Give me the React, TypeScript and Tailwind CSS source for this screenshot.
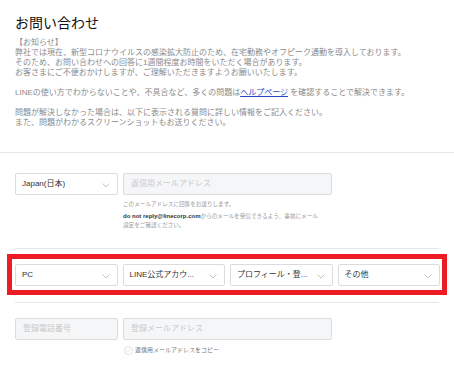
import React from "react";

const FONT = '"Liberation Sans", "Noto Sans CJK JP", sans-serif';

function Chevron() {
  return (
    <svg width="8" height="5" viewBox="0 0 8 5" className="shrink-0">
      <path d="M0.5 0.5 L4 4 L7.5 0.5" fill="none" stroke="#c4c4c4" strokeWidth="1" />
    </svg>
  );
}

function Select({ label }: { label: string }) {
  return (
    <div className="flex h-[22px] items-center justify-between rounded-[2px] border border-[#dcdcdc] bg-white pl-[6px] pr-[7px]">
      <span className="whitespace-nowrap text-[8px] leading-[10px] text-[#333]">{label}</span>
      <div className="mt-[3px]">
        <Chevron />
      </div>
    </div>
  );
}

function Input({ placeholder, className }: { placeholder: string; className?: string }) {
  return (
    <div
      className={
        "flex h-[22px] items-center rounded-[2px] border border-[#dcdcdc] bg-[#f5f6f8] pl-[7px] " +
        (className ?? "")
      }
    >
      <span className="whitespace-nowrap text-[8px] leading-[10px] text-[#c9c9c9]">{placeholder}</span>
    </div>
  );
}

export default function App() {
  return (
    <div className="min-h-[369px] w-[454px] bg-white" style={{ fontFamily: FONT }}>
      <div className="px-[15px] pt-[13px]">
        <h1 className="text-[14px] font-normal leading-[20px] text-[#111]">お問い合わせ</h1>
        <div className="mt-[5px] text-[8px] leading-[10px] text-[#8a8a8a]">
          <p>
            【お知らせ】
            <br />
            弊社では現在、新型コロナウイルスの感染拡大防止のため、在宅勤務やオフピーク通勤を導入しております。
            <br />
            そのため、お問い合わせへの回答に1週間程度お時間をいただく場合があります。
            <br />
            お客さまにご不便おかけしますが、ご理解いただきますようお願いいたします。
          </p>
          <p className="mt-[10px]">
            LINEの使い方でわからないことや、不具合など、多くの問題は
            <span className="text-[#2a46c4] underline">ヘルプページ</span> を確認することで解決できます。
          </p>
          <p className="mt-[10px]">
            問題が解決しなかった場合は、以下に表示される質問に詳しい情報をご記入ください。
            <br />
            また、問題がわかるスクリーンショットもお送りください。
          </p>
        </div>
      </div>

      <div className="mt-[24px] h-px w-full bg-[#e6e6e6]" />

      <div className="px-[15px] pt-[20px]">
        <div className="flex gap-[5px]">
          <div className="w-[103px]">
            <Select label="Japan(日本)" />
          </div>
          <div className="w-[209px]">
            <Input placeholder="返信用メールアドレス" />
          </div>
        </div>
        <div className="ml-[108px] mt-[4.5px] text-[5.6px] leading-[9px] text-[#999]">
          <p>このメールアドレスに回答をお送りします。</p>
          <p className="mt-[3px]">
            <span className="text-[6px] font-bold text-[#333]">do not reply@linecorp.com</span>
            からのメールを受信できるよう、事前にメール
            <br />
            設定をご確認ください。
          </p>
        </div>

        <div className="mt-[18.5px] h-px w-full bg-[#e8e8e8]" />

        <div className="-mx-[8px] mt-[5px] border-[5px] border-[#ed1c24] pb-[4px] pl-[3px] pr-[2px] pt-[5px]">
          <div className="grid grid-cols-4 gap-[5px]">
            <Select label="PC" />
            <Select label="LINE公式アカウ..." />
            <Select label="プロフィール・登..." />
            <Select label="その他" />
          </div>
        </div>

        <div className="mt-[7px] h-px w-full bg-[#e8e8e8]" />

        <div className="mt-[15px] flex gap-[5px]">
          <div className="w-[103px]">
            <Input placeholder="登録電話番号" />
          </div>
          <div className="w-[209px]">
            <Input placeholder="登録メールアドレス" />
          </div>
        </div>
        <div className="ml-[109px] mt-[6px] flex items-center gap-[2px]">
          <svg width="9" height="9" viewBox="0 0 9 9">
            <circle cx="4.5" cy="4.5" r="4" fill="white" stroke="#dcdcdc" strokeWidth="0.8" />
            <path d="M2.6 4.6 L3.9 5.9 L6.4 3.2" fill="none" stroke="#dcdcdc" strokeWidth="0.8" />
          </svg>
          <span className="text-[6px] leading-[9px] text-[#777]">返信用メールアドレスをコピー</span>
        </div>
      </div>
    </div>
  );
}
